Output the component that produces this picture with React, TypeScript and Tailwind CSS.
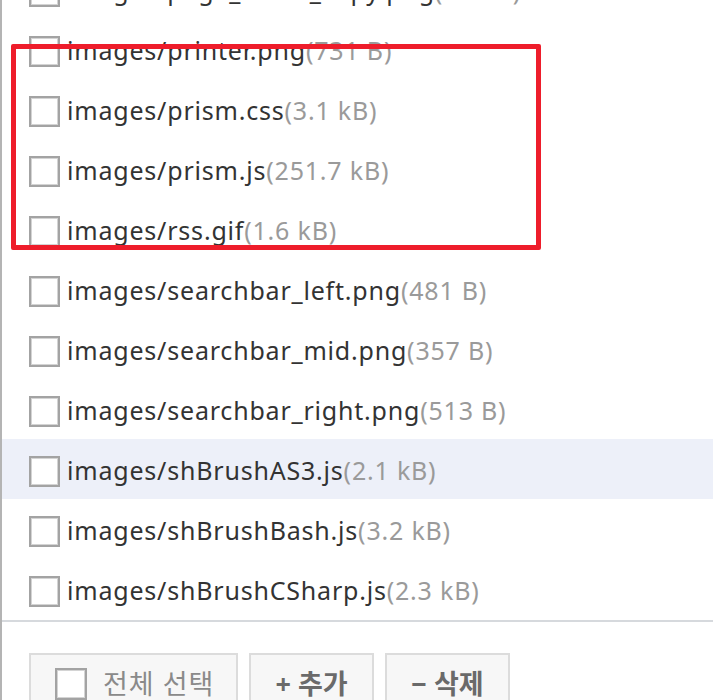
import React from "react";

const rows: { name: string; size: string; hl?: boolean }[] = [
  { name: "images/page_white_copy.png", size: "(309 B)" },
  { name: "images/printer.png", size: "(731 B)" },
  { name: "images/prism.css", size: "(3.1 kB)" },
  { name: "images/prism.js", size: "(251.7 kB)" },
  { name: "images/rss.gif", size: "(1.6 kB)" },
  { name: "images/searchbar_left.png", size: "(481 B)" },
  { name: "images/searchbar_mid.png", size: "(357 B)" },
  { name: "images/searchbar_right.png", size: "(513 B)" },
  { name: "images/shBrushAS3.js", size: "(2.1 kB)", hl: true },
  { name: "images/shBrushBash.js", size: "(3.2 kB)" },
  { name: "images/shBrushCSharp.js", size: "(2.3 kB)" },
];

function Box() {
  return (
    <span className="block w-[31px] h-[31px] shrink-0 bg-white border-2 border-[#a3a3a3] shadow-[inset_0_0_0_1px_#d4d4d4]" />
  );
}

export default function App() {
  return (
    <div
      className="relative w-[713px] h-[700px] overflow-hidden bg-white border-l-2 border-[#b4b4b4]"
      style={{ fontFamily: '"Noto Sans", "Noto Sans CJK KR", sans-serif' }}
    >
      <div className="flex flex-col mt-[-41px]">
        {rows.map((r) => (
          <div
            key={r.name}
            className={`h-[60px] flex items-center pl-[27px] ${r.hl ? "bg-[#edf0f9]" : ""}`}
          >
            <div className="mt-[5px]">
              <Box />
            </div>
            <div className="ml-[7px] mt-[2px] text-[25px] tracking-[0.8px] leading-none whitespace-nowrap">
              <span className="text-[#333333]">{r.name}</span>
              <span className="text-[#9a9a9a]">{r.size}</span>
            </div>
          </div>
        ))}
      </div>
      <div className="mt-[1px] border-t-2 border-[#d6d9dd]" />
      <div className="flex gap-[11px] pl-[27px] pt-[31px]">
        <div className="w-[209px] h-[70px] bg-[#f7f7f7] border-2 border-[#dcdcdc] flex items-start pt-[13px] pl-[24px]">
          <span className="block w-[32px] h-[32px] bg-white border-2 border-[#a3a3a3] shadow-[inset_0_0_0_1px_#d4d4d4]" />
          <span className="ml-[16px] text-[27px] tracking-[1px] leading-[32px] text-[#8a8a8a]">전체 선택</span>
        </div>
        <div className="w-[125px] h-[70px] bg-[#f7f7f7] border-2 border-[#dcdcdc] flex justify-center pt-[13px]">
          <span className="text-[27px] leading-[32px] font-bold text-[#6a6a6a]">+ 추가</span>
        </div>
        <div className="w-[125px] h-[70px] bg-[#f7f7f7] border-2 border-[#dcdcdc] flex justify-center pt-[13px]">
          <span className="text-[27px] leading-[32px] font-bold text-[#6a6a6a]">− 삭제</span>
        </div>
      </div>
      <div className="absolute left-[9px] top-[44px] w-[530px] h-[206px] border-[5px] border-[#ee1d2b] rounded-[2px]" />
    </div>
  );
}
